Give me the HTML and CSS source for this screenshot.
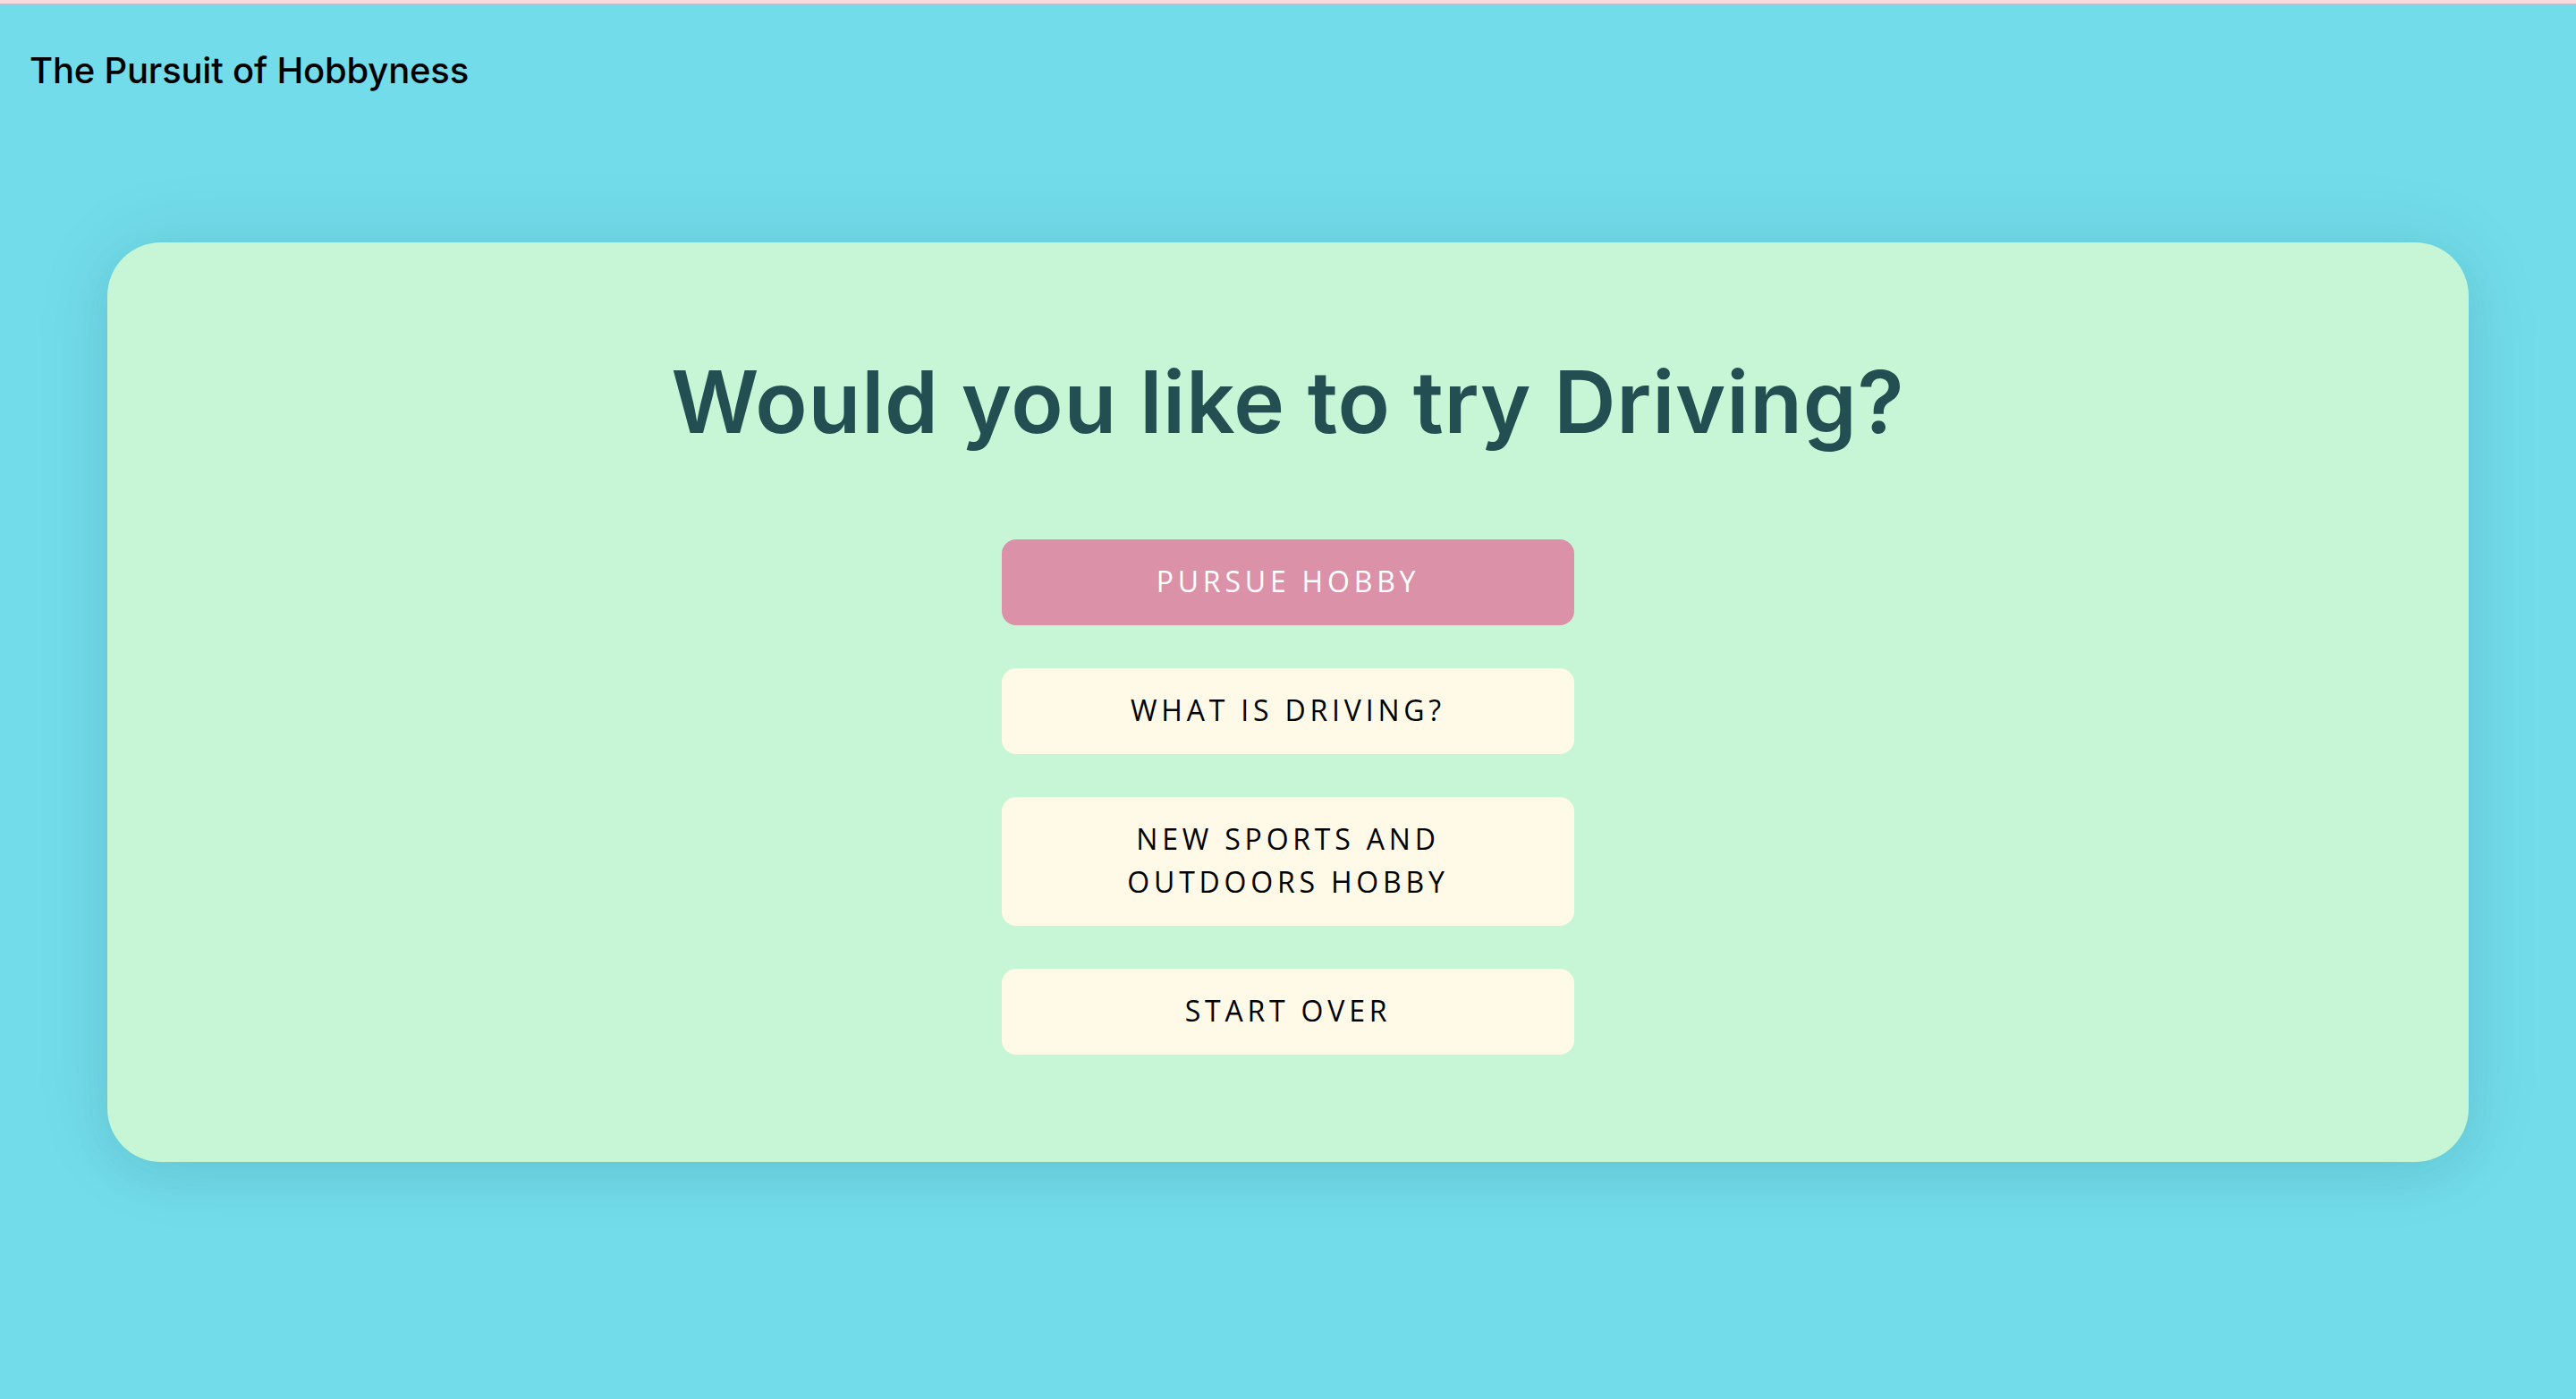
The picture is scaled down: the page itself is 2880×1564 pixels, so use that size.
FILE: index.html
```html
<!DOCTYPE html>
<html lang="en">
<head>
<meta charset="utf-8">
<title>The Pursuit of Hobbyness</title>
<link rel="stylesheet" href="styles.css">
</head>
<body>
<div class="topbar"></div>
<header class="site-header">
  <div class="brand">The Pursuit of Hobbyness</div>
</header>
<main class="main">
  <section class="card">
    <h1 class="question">Would you like to try Driving?</h1>
    <div class="actions">
      <button class="btn btn-primary">Pursue Hobby</button>
      <button class="btn">What is Driving?</button>
      <button class="btn">New Sports and Outdoors Hobby</button>
      <button class="btn">Start Over</button>
    </div>
  </section>
</main>
</body>
</html>
```

FILE: styles.css
```css
html, body {
  margin: 0;
  padding: 0;
}
body {
  background: #72dcea;
  min-height: 100vh;
  font-family: Inter, "Liberation Sans", sans-serif;
}
.topbar {
  height: 4px;
  background: #f9dadd;
  border-bottom: 1px solid #c7bcc5;
}
.site-header {
  padding: 50px 33px 0;
  height: 116px;
  box-sizing: border-box;
}
.brand {
  font-family: Inter, "Liberation Sans", sans-serif;
  font-size: 40px;
  line-height: 48px;
  font-weight: 500;
  color: #000;
  letter-spacing: -0.2px;
}
.main {
  padding: 150px 120px 0;
}
.card {
  background: #c6f6d5;
  border-radius: 60px;
  padding: 121px 0 120px;
  box-shadow: 0 0 90px rgba(0, 40, 60, 0.09), 0 16px 50px rgba(0, 40, 60, 0.06);
  display: flex;
  flex-direction: column;
  align-items: center;
}
.question {
  margin: 0 0 96px;
  font-family: Inter, "Liberation Sans", sans-serif;
  font-size: 96px;
  line-height: 1.2;
  font-weight: 600;
  color: #234e52;
  letter-spacing: 0.8px;
  text-align: center;
}
.actions {
  display: flex;
  flex-direction: column;
  gap: 48px;
}
.btn {
  width: 640px;
  box-sizing: border-box;
  padding: 23px 64px 25px;
  border: none;
  border-radius: 16px;
  background: #fffae8;
  color: #000;
  font-family: "Open Sans", "Noto Sans", sans-serif;
  font-size: 32px;
  line-height: 48px;
  font-weight: 400;
  letter-spacing: 4.8px;
  text-transform: uppercase;
  text-align: center;
}
.btn-primary {
  background: #db91a7;
  color: #fff;
}
```
